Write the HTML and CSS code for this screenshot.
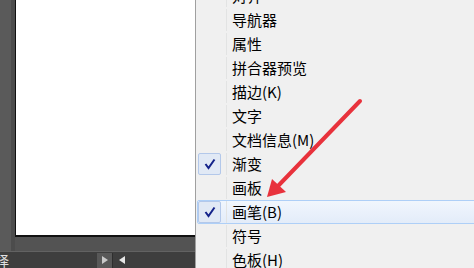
FILE: index.html
```html
<!DOCTYPE html>
<html lang="zh-CN">
<head>
<meta charset="utf-8">
<link rel="stylesheet" href="styles.css">
</head>
<body>
<div class="screen">
  <div class="editor">
    <div class="workspace">
      <div class="strip"></div>
      <div class="artboard-wrap">
        <div class="artboard"></div>
      </div>
    </div>
    <div class="statusbar">
      <span class="status-text">择</span>
      <span class="btn-next"><svg width="8" height="10" viewBox="0 0 8 10"><path d="M1 1 L7 5 L1 9 Z" fill="#c9c9c9"/></svg></span>
      <span class="btn-prev"><svg width="8" height="10" viewBox="0 0 8 10"><path d="M7 1 L1 5 L7 9 Z" fill="#e6e6e6"/></svg></span>
    </div>
  </div>
  <div class="menu">
    <ul class="menu-list">
      <li class="item"><span class="gutter"></span><span class="label">对齐</span></li>
      <li class="item"><span class="gutter"></span><span class="label">导航器</span></li>
      <li class="item"><span class="gutter"></span><span class="label">属性</span></li>
      <li class="item"><span class="gutter"></span><span class="label">拼合器预览</span></li>
      <li class="item"><span class="gutter"></span><span class="label">描边(K)</span></li>
      <li class="item"><span class="gutter"></span><span class="label">文字</span></li>
      <li class="item"><span class="gutter"></span><span class="label">文档信息(M)</span></li>
      <li class="item"><span class="gutter"><span class="check"><svg width="14" height="14" viewBox="0 0 14 14"><path d="M2.5 7 L5.5 11 L11.5 2.5" fill="none" stroke="#14238a" stroke-width="2"/></svg></span></span><span class="label">渐变</span></li>
      <li class="item"><span class="gutter"></span><span class="label">画板</span></li>
      <li class="item active"><span class="gutter"><span class="check"><svg width="14" height="14" viewBox="0 0 14 14"><path d="M2.5 7 L5.5 11 L11.5 2.5" fill="none" stroke="#14238a" stroke-width="2"/></svg></span></span><span class="label">画笔(B)</span></li>
      <li class="item"><span class="gutter"></span><span class="label">符号</span></li>
      <li class="item"><span class="gutter"></span><span class="label">色板(H)</span></li>
    </ul>
    <svg class="arrow" width="280" height="268" viewBox="194 0 280 268">
      <line x1="358" y1="101" x2="276" y2="186" stroke="#e8323c" stroke-width="4" stroke-linecap="round"/>
      <path d="M265 197 L270 179 L284 192 Z" fill="#e8323c"/>
    </svg>
  </div>
</div>
</body>
</html>
```
FILE: styles.css
```css
* { box-sizing: border-box; }
html, body { margin: 0; padding: 0; }
body {
  width: 474px;
  height: 268px;
  overflow: hidden;
  font-family: "Noto Sans CJK SC", "Liberation Sans", sans-serif;
}
.screen {
  display: flex;
  width: 474px;
  height: 268px;
}
.editor {
  width: 195px;
  display: flex;
  flex-direction: column;
  background: #545454;
}
.workspace {
  height: 252px;
  display: flex;
  background: #535353;
  border-bottom: 1px solid #626262;
}
.strip {
  width: 15px;
  background: linear-gradient(to right, #5a5a5a 0, #5a5a5a 11px, #4c4c4c 11px, #4c4c4c 15px);
}
.artboard-wrap {
  flex: 1;
}
.artboard {
  height: 237px;
  background: #ffffff;
  border-left: 1px solid #111;
  border-bottom: 2px solid #111;
}
.statusbar {
  flex: 1;
  display: flex;
  align-items: center;
  background: #3e3e3e;
  color: #e0e0e0;
  font-size: 14px;
}
.status-text {
  margin-left: -5px;
  width: 102px;
  line-height: 15px;
}
.btn-next {
  width: 16px;
  height: 15px;
  background: #585858;
  display: flex;
  align-items: center;
  justify-content: center;
  border-right: 1px solid #2e2e2e;
}
.btn-prev {
  margin-left: 5px;
  display: flex;
  align-items: center;
}
.menu {
  position: relative;
  flex: 1;
  background: #f0f0f0;
  border-left: 1px solid #a0a0a0;
  overflow: hidden;
}
.menu-list {
  list-style: none;
  margin: -16px -2px 0 0;
  padding: 0 0 0 1px;
}
.item {
  height: 24px;
  display: flex;
  align-items: center;
  border: 1px solid transparent;
  border-radius: 2px;
}
.item.active {
  border-color: #aecff7;
  background: linear-gradient(to bottom, #f1f6fd, #e3ecf9);
}
.gutter {
  width: 29px;
  height: 22px;
  display: flex;
  align-items: center;
  border-right: 1px solid #e2e3e3;
  margin-right: 5px;
}
.check {
  width: 23px;
  height: 22px;
  display: flex;
  align-items: center;
  justify-content: center;
  background: #e1e9f5;
  border: 1px solid #b3c8ea;
  border-radius: 2px;
}
.label {
  font-size: 15px;
  color: #000;
  line-height: 22px;
}
.arrow {
  position: absolute;
  left: 0;
  top: 0;
  pointer-events: none;
}
```
